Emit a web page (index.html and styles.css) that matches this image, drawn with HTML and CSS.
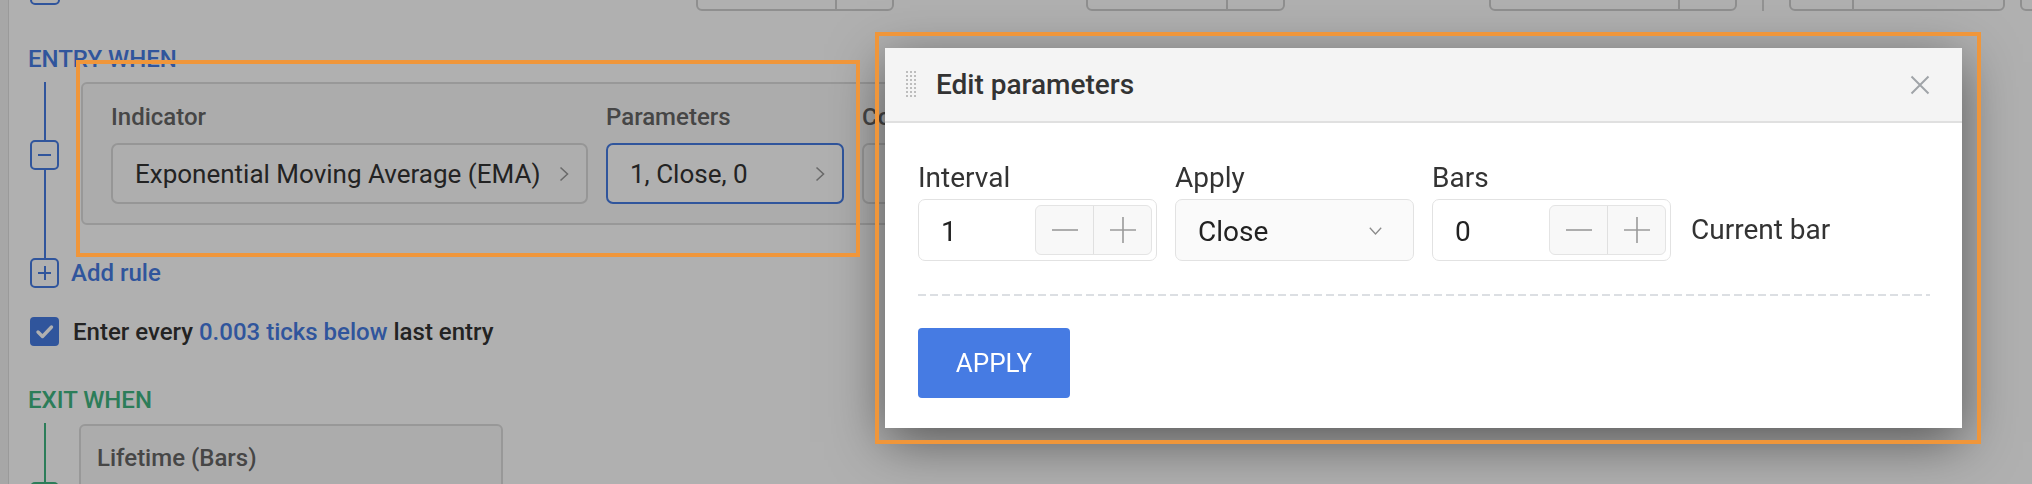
FILE: index.html
```html
<!DOCTYPE html>
<html lang="en">
<head>
<meta charset="utf-8">
<title>Edit parameters</title>
<link rel="stylesheet" href="styles.css">
</head>
<body>
<div class="app">
  <div class="side-edge"></div>
  <main class="page">
    <div class="topbar">
      <span class="top-icon"></span>
      <div class="tgroup tg1"><span class="tg-main"></span><span class="tg-side"></span></div>
      <div class="tgroup tg2"><span class="tg-main"></span><span class="tg-side"></span></div>
      <div class="tgroup tg3"><span class="tg-main"></span><span class="tg-side"></span></div>
      <span class="tvline"></span>
      <div class="tgroup tg4"><span class="tg-a"></span><span class="tg-b"></span></div>
      <div class="tgroup tg5"><span class="tg-a"></span></div>
    </div>

    <section class="block">
      <h3 class="block-title entry-title">ENTRY WHEN</h3>
      <div class="rule-row">
        <div class="rail blue">
          <span class="seg seg-top"></span>
          <span class="rail-box minus"></span>
          <span class="seg seg-fill"></span>
        </div>
        <div class="rule-card">
          <div class="field f-ind">
            <div class="flabel">Indicator</div>
            <div class="select"><span>Exponential Moving Average (EMA)</span>
              <svg class="chev-r" viewBox="0 0 10 16" width="10" height="16"><polyline points="1.5,1.5 8.5,8 1.5,14.5" fill="none" stroke="#9a9a9a" stroke-width="1.6"/></svg>
            </div>
          </div>
          <div class="field f-par">
            <div class="flabel">Parameters</div>
            <div class="select active"><span>1, Close, 0</span>
              <svg class="chev-r" viewBox="0 0 10 16" width="10" height="16"><polyline points="1.5,1.5 8.5,8 1.5,14.5" fill="none" stroke="#9a9a9a" stroke-width="1.6"/></svg>
            </div>
          </div>
          <div class="field f-cond">
            <div class="flabel">Condition</div>
            <div class="select"></div>
          </div>
        </div>
      </div>
      <div class="add-row">
        <span class="rail-box plus"></span>
        <span class="add-text">Add rule</span>
      </div>
      <div class="check-row">
        <span class="checkbox"><svg viewBox="0 0 29 29" width="29" height="29"><polyline points="8,15 12.5,19.5 21.5,10" fill="none" stroke="#fff" stroke-width="3.4" stroke-linecap="round" stroke-linejoin="round"/></svg></span>
        <span class="check-text">Enter every <span class="link">0.003 ticks below</span> last entry</span>
      </div>
    </section>

    <section class="block">
      <h3 class="block-title exit-title">EXIT WHEN</h3>
      <div class="rule-row exit-row">
        <div class="rail green">
          <span class="seg seg-top2"></span>
          <span class="rail-box"></span>
        </div>
        <div class="life-card">
          <div class="flabel">Lifetime (Bars)</div>
          <div class="life-input"></div>
        </div>
      </div>
    </section>
  </main>
</div>

<div class="overlay"></div>
<div class="hl hl-card"></div>
<div class="hl hl-modal"></div>

<div class="modal">
  <div class="modal-head">
    <span class="drag"></span>
    <h2 class="modal-title">Edit parameters</h2>
    <svg class="close" viewBox="0 0 20 20" width="20" height="20"><path d="M1.5 1.5 L18.5 18.5 M18.5 1.5 L1.5 18.5" stroke="#a0a4a8" stroke-width="2" fill="none"/></svg>
  </div>
  <div class="modal-body">
    <div class="fields">
      <div class="mfield">
        <div class="mlabel">Interval</div>
        <div class="minput">
          <span class="mval">1</span>
          <span class="stepper">
            <span class="step"><svg viewBox="0 0 26 26" width="26" height="26"><path d="M0 13 H26" stroke="#9a9a9a" stroke-width="1.6"/></svg></span>
            <span class="step"><svg viewBox="0 0 26 26" width="26" height="26"><path d="M0 13 H26 M13 0 V26" stroke="#9a9a9a" stroke-width="1.6"/></svg></span>
          </span>
        </div>
      </div>
      <div class="mfield">
        <div class="mlabel">Apply</div>
        <div class="minput mselect">
          <span class="mval">Close</span>
          <svg class="chev-d" viewBox="0 0 13 8" width="13" height="8"><polyline points="0.8,0.8 6.5,7 12.2,0.8" fill="none" stroke="#8a8a8a" stroke-width="1.3"/></svg>
        </div>
      </div>
      <div class="mfield">
        <div class="mlabel">Bars</div>
        <div class="minput">
          <span class="mval">0</span>
          <span class="stepper">
            <span class="step"><svg viewBox="0 0 26 26" width="26" height="26"><path d="M0 13 H26" stroke="#9a9a9a" stroke-width="1.6"/></svg></span>
            <span class="step"><svg viewBox="0 0 26 26" width="26" height="26"><path d="M0 13 H26 M13 0 V26" stroke="#9a9a9a" stroke-width="1.6"/></svg></span>
          </span>
        </div>
      </div>
      <div class="mnote">Current bar</div>
    </div>
    <div class="dashed"></div>
    <button class="apply-btn" type="button">APPLY</button>
  </div>
</div>
</body>
</html>
```

FILE: styles.css
```css
* { box-sizing: border-box; margin: 0; padding: 0; }
html, body { width: 2032px; height: 484px; overflow: hidden; }
body {
  background: #fff;
  font-family: Roboto, "Liberation Sans", Arial, sans-serif;
  color: #333;
  position: relative;
}

/* ---------- underlying page ---------- */
.app { display: flex; height: 484px; overflow: hidden; }
.side-edge { width: 9px; flex: none; background: #f2f2f2; border-right: 1px solid #e0e0e0; }
.page { flex: 1; min-width: 0; padding-left: 19px; overflow: hidden; }

.topbar { display: flex; align-items: flex-end; height: 61px; margin-top: -50px; }
.top-icon { width: 30px; height: 30px; margin-left: 2px; margin-bottom: 6px; border: 2px solid #467be3; border-radius: 5px; flex: none; }
.tgroup { display: flex; height: 61px; border: 2px solid #d0d0d0; border-radius: 6px; flex: none; }
.tgroup > span + span { border-left: 2px solid #d0d0d0; }
.tg1 { margin-left: 636px; width: 198px; }
.tg1 .tg-main { width: 137px; }
.tg2 { margin-left: 192px; width: 199px; }
.tg2 .tg-main { width: 138px; }
.tg3 { margin-left: 204px; width: 248px; }
.tg3 .tg-main { width: 187px; }
.tvline { width: 2px; height: 12px; margin-left: 25px; background: #d6d6d6; flex: none; align-self: flex-end; }
.tg4 { margin-left: 25px; width: 216px; }
.tg4 .tg-a { width: 61px; }
.tg5 { margin-left: 15px; width: 60px; }

.block-title { font-size: 24px; line-height: 28px; font-weight: 500; letter-spacing: 0; }
.entry-title { color: #467be3; margin-top: 34px; }
.exit-title { color: #41b582; margin-top: 40px; }

.rule-row { display: flex; margin-top: 9px; gap: 22px; }
.rail { width: 29px; margin-left: 2px; display: flex; flex-direction: column; align-items: center; flex: none; }
.seg { width: 2px; flex: none; }
.blue .seg { background: #467be3; }
.green .seg { background: #41b582; }
.seg-top { height: 58px; }
.seg-fill { flex: 1; }
.seg-top2 { height: 59px; }
.rail-box { width: 29px; height: 30px; border: 2px solid #467be3; border-radius: 5px; position: relative; flex: none; display: block; }
.green .rail-box { border-color: #41b582; }
.minus::before, .plus::before, .plus::after { content: ""; position: absolute; background: #467be3; }
.minus::before, .plus::before { left: 6px; right: 6px; top: 12px; height: 2px; }
.plus::after { top: 6px; bottom: 6px; left: 11.5px; width: 2px; }

.rule-card {
  display: flex; gap: 18px;
  padding: 19px 29px 19px 28px;
  border: 2px solid #dcdcdc; border-radius: 6px;
  background: #fafafa;
  margin-bottom: 33px;
  flex: none;
}
.flabel { font-size: 24px; line-height: 28px; font-weight: 500; color: #666; margin-bottom: 12px; }
.field { flex: none; }
.f-ind { width: 477px; }
.f-par { width: 238px; }
.f-cond { width: 420px; }
.select {
  height: 61px; display: flex; align-items: center; justify-content: space-between;
  padding: 0 17px 0 22px;
  border: 2px solid #dadada; border-radius: 7px; background: #fdfdfd;
  font-size: 26px; color: #333;
}
.select.active { border-color: #467be3; background: #fff; }

.add-row { display: flex; align-items: center; gap: 12px; }
.add-row .rail-box { margin-left: 2px; }
.add-text { font-size: 24px; font-weight: 500; color: #467be3; }

.check-row { display: flex; align-items: center; gap: 14px; margin-top: 29px; }
.checkbox { width: 29px; height: 29px; margin-left: 2px; border-radius: 4px; background: #467be3; display: block; flex: none; }
.checkbox svg { display: block; }
.check-text { font-size: 24px; font-weight: 500; color: #333; }
.link { color: #467be3; }

.exit-row { gap: 20px; }
.life-card {
  width: 424px; margin-top: 1px;
  padding: 18px 16px 0;
  border: 2px solid #dcdcdc; border-radius: 6px;
  background: #fafafa;
  height: 120px;
}
.life-input { margin-top: 11px; width: 355px; height: 60px; border: 2px solid #dadada; border-radius: 7px; margin-left: 2px; background: #fdfdfd; }

/* ---------- overlay & highlights ---------- */
.overlay { position: fixed; inset: 0; background: rgba(0, 0, 0, 0.31); z-index: 1; }
.hl { position: absolute; border: 4px solid #f0963a; z-index: 3; pointer-events: none; }
.hl-card { left: 76px; top: 60px; width: 784px; height: 197px; }
.hl-modal { left: 875px; top: 32px; width: 1106px; height: 412px; }

/* ---------- modal ---------- */
.modal {
  position: absolute; left: 885px; top: 48px; width: 1077px; height: 380px;
  background: #fff; z-index: 2;
  box-shadow: 0 14px 50px rgba(0, 0, 0, 0.5);
}
.modal-head {
  height: 75px; display: flex; align-items: center;
  padding: 0 32px 0 21px;
  background: #f4f4f4; border-bottom: 2px solid #e0e0e0;
}
.drag {
  width: 11px; height: 27px; flex: none;
  background-image: radial-gradient(circle, #bdbdbd 1px, transparent 1.3px);
  background-size: 4px 4px;
  background-position: -1px -1px;
  margin-right: 19px;
}
.modal-title { font-size: 28px; font-weight: 500; color: #333; line-height: 34px; }
.close { margin-left: auto; display: block; }

.modal-body { padding: 39px 32px 30px 33px; }
.fields { display: flex; align-items: flex-end; gap: 18px; }
.mfield { width: 239px; flex: none; }
.mlabel { font-size: 28px; line-height: 32px; color: #333; margin-bottom: 5px; }
.minput {
  height: 62px; display: flex; align-items: center;
  padding-left: 22px; padding-right: 4px; padding-top: 2px;
  border: 1.5px solid #e2e2e2; border-radius: 7px; background: #fff;
}
.minput .stepper { margin-top: -2px; }
.mval { font-size: 28px; color: #222; flex: 1; }
.stepper {
  display: flex; width: 117px; height: 50px; flex: none;
  border: 1.5px solid #e4e4e4; border-radius: 6px; background: #f8f8f8;
}
.step { flex: 1; display: flex; align-items: center; justify-content: center; }
.step + .step { border-left: 1.5px solid #e0e0e0; }
.step svg { display: block; }
.mselect { background: #fafafa; padding-right: 31px; }
.chev-d { display: block; flex: none; }
.mnote { font-size: 28px; line-height: 62px; padding-top: 2px; color: #333; margin-left: 2px; }

.dashed {
  margin-top: 33px; height: 2px;
  background: repeating-linear-gradient(to right, #dcdfe3 0 8px, transparent 8px 12px);
}
.apply-btn {
  margin-top: 32px; width: 152px; height: 70px;
  border: none; border-radius: 4px;
  background: #467be3; color: #fff;
  font-family: Roboto, "Liberation Sans", Arial, sans-serif;
  font-size: 26px; font-weight: 400;
  display: block;
}
```
